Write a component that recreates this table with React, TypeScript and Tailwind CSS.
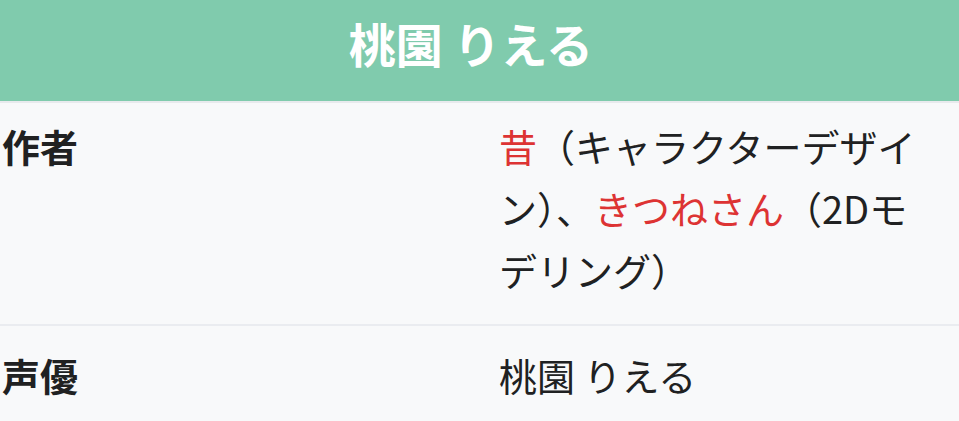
import React from "react";

export default function App() {
  const font = { fontFamily: '"Noto Sans CJK JP", "Noto Sans", sans-serif' };
  return (
    <div className="w-[959px] h-[421px] overflow-hidden bg-[#f8f9fa] text-[#202122]" style={font}>
      <div className="h-[103px] box-border bg-[#80cbad] border-b-2 border-[#e8eaed] flex items-center justify-center pr-[17px] pb-[17px]">
        <span className="text-[47px] font-bold text-white leading-none">桃園 りえる</span>
      </div>
      <div className="grid grid-cols-[480px_1fr] border-b-2 border-[#eaecf0] pt-[12px] pb-[23px]">
        <div className="pl-[2px] text-[38px] font-bold leading-[62px]">作者</div>
        <div className="pl-[19px] pr-[30px] text-[38px] leading-[62px]">
          <span className="text-[#d33]">昔</span>（キャラクターデザイン）、<span className="text-[#d33]">きつねさん</span>（2Dモデリング）
        </div>
      </div>
      <div className="grid grid-cols-[480px_1fr] pt-[18px]">
        <div className="pl-[2px] text-[38px] font-bold leading-[62px]">声優</div>
        <div className="pl-[19px] text-[38px] leading-[62px]">桃園 りえる</div>
      </div>
    </div>
  );
}
